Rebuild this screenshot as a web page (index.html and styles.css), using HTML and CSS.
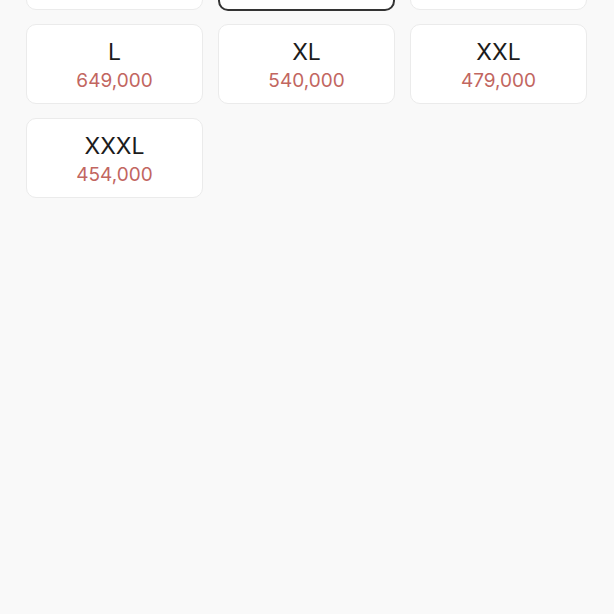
FILE: index.html
```html
<!DOCTYPE html>
<html lang="ko">
<head>
<meta charset="utf-8">
<link rel="stylesheet" href="styles.css">
</head>
<body>
<div class="page">
  <div class="grid">
    <div class="card"></div>
    <div class="card selected"></div>
    <div class="card"></div>
    <div class="card"><div class="size">L</div><div class="price">649,000</div></div>
    <div class="card"><div class="size">XL</div><div class="price">540,000</div></div>
    <div class="card"><div class="size">XXL</div><div class="price">479,000</div></div>
    <div class="card"><div class="size">XXXL</div><div class="price">454,000</div></div>
  </div>
</div>
</body>
</html>
```
FILE: styles.css
```css
html, body {
  margin: 0;
  padding: 0;
  height: 100%;
  overflow: hidden;
  background: #f9f9f9;
  font-family: Inter, "Noto Sans", sans-serif;
}
.page {
  height: 614px;
  overflow: hidden;
  padding: 0 27px 0 26px;
  box-sizing: border-box;
}
.grid {
  display: grid;
  grid-template-columns: repeat(3, 177px);
  grid-auto-rows: 80px;
  column-gap: 15px;
  row-gap: 14px;
  margin-top: -70px;
}
.card {
  background: #ffffff;
  border: 1px solid #ebebeb;
  border-radius: 10px;
  box-sizing: border-box;
  display: flex;
  flex-direction: column;
  align-items: center;
  justify-content: center;
  gap: 5px;
  padding-top: 2px;
}
.card.selected {
  border: 2px solid #333333;
  margin-bottom: -1px;
}
.size {
  font-size: 23px;
  line-height: 26px;
  color: #1c1c1c;
  font-weight: 400;
}
.price {
  font-size: 19px;
  line-height: 22px;
  color: #c2665f;
  font-weight: 400;
}
```
